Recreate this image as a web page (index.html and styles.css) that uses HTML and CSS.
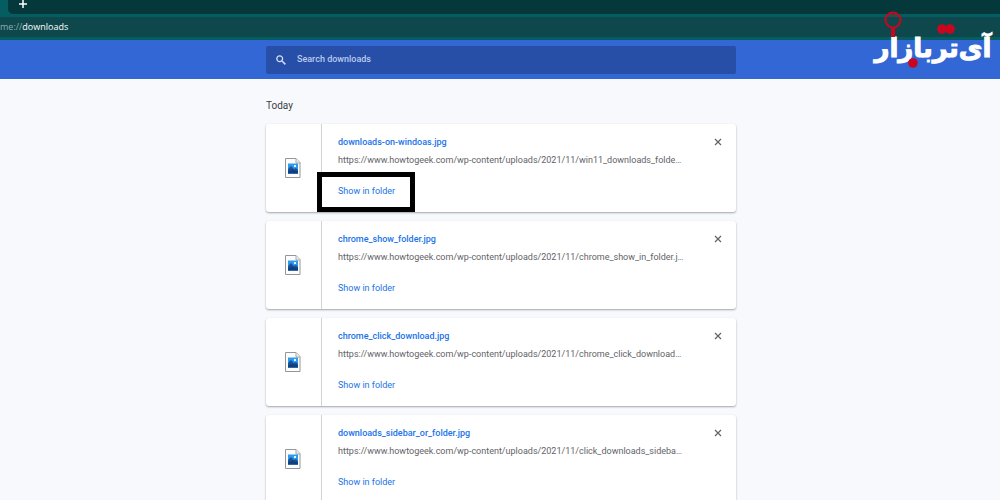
FILE: index.html
```html
<!DOCTYPE html>
<html lang="en">
<head>
<meta charset="utf-8">
<title>Downloads</title>
<link rel="stylesheet" href="styles.css">
</head>
<body>
<svg class="defs" aria-hidden="true">
  <symbol id="file" viewBox="0 0 16 20">
    <path d="M.5.5h10.500l4 4v15H.5z" fill="#fdfdfd" stroke="#92979b"/>
    <path d="M11 .5V5h4" fill="#eee" stroke="#a6a9ab"/>
    <path d="M3 5.500h10v10H3z" fill="#2c9bed"/>
    <path d="M3 11l3-3 3 3 2-1 2 2v3.500H3z" fill="#17539b"/>
    <path d="M3 13.500l4-2 6 2v2H3z" fill="#123f7d"/>
    <rect x="9" y="7" width="2" height="2" fill="#e9f8ff"/>
  </symbol>
  <symbol id="close" viewBox="0 0 8 8"><path d="M1 1l6 6M7 1L1 7" stroke="#5f6368" stroke-width="1.200"/></symbol>
</svg>
<header class="browser">
  <div class="tabs"><button class="new-tab" aria-label="New tab"><svg class="plus" viewBox="0 0 8 8"><path d="M4 0v8M0 4h8" stroke="#fff" stroke-width="1.500"/></svg></button></div>
  <div class="address"><span class="scheme">me://</span>downloads</div>
</header>
<div class="toolbar">
  <label class="search">
    <svg class="glass" viewBox="0 0 10 10" aria-hidden="true"><circle cx="3.700" cy="3.700" r="2.900" fill="none" stroke="#d3def6" stroke-width="1.300"/><path d="M6 6l3.400 3.400" stroke="#d3def6" stroke-width="1.500"/></svg>
    <input class="search-input" type="text" placeholder="Search downloads" aria-label="Search downloads">
  </label>
</div>
<svg class="logo" viewBox="0 0 120 60" role="img" aria-label="آی‌تربازار">
  <text class="logo-text" x="60" y="47" text-anchor="middle">آی‌تربازار</text>
  <circle cx="20" cy="10" r="7.500" fill="none" stroke="#c8071f" stroke-width="2"/>
  <path d="M16.500 6.500q3.500-2.500 7 0" fill="none" stroke="#c8071f"/>
  <path d="M20 18v9" stroke="#c8071f" stroke-width="4"/>
  <circle cx="69" cy="19" r="4.800" fill="#c8071f"/>
  <circle cx="77" cy="19" r="4.800" fill="#c8071f"/>
  <circle cx="40" cy="53" r="4.800" fill="#c8071f"/>
</svg>
<main class="downloads">
  <h1 class="day">Today</h1>
  <article class="card">
    <div class="thumb"><svg class="file"><use href="#file"/></svg></div>
    <div class="details">
      <a class="name" href="#">downloads-on-windoas.jpg</a>
      <span class="url">https://www.howtogeek.com/wp-content/uploads/2021/11/win11_downloads_folde…</span>
      <a class="show marked" href="#">Show in folder</a>
    </div>
    <button class="remove" aria-label="Remove from list"><svg class="close"><use href="#close"/></svg></button>
  </article>
  <article class="card">
    <div class="thumb"><svg class="file"><use href="#file"/></svg></div>
    <div class="details">
      <a class="name" href="#">chrome_show_folder.jpg</a>
      <span class="url">https://www.howtogeek.com/wp-content/uploads/2021/11/chrome_show_in_folder.j…</span>
      <a class="show" href="#">Show in folder</a>
    </div>
    <button class="remove" aria-label="Remove from list"><svg class="close"><use href="#close"/></svg></button>
  </article>
  <article class="card">
    <div class="thumb"><svg class="file"><use href="#file"/></svg></div>
    <div class="details">
      <a class="name" href="#">chrome_click_download.jpg</a>
      <span class="url">https://www.howtogeek.com/wp-content/uploads/2021/11/chrome_click_download…</span>
      <a class="show" href="#">Show in folder</a>
    </div>
    <button class="remove" aria-label="Remove from list"><svg class="close"><use href="#close"/></svg></button>
  </article>
  <article class="card">
    <div class="thumb"><svg class="file"><use href="#file"/></svg></div>
    <div class="details">
      <a class="name" href="#">downloads_sidebar_or_folder.jpg</a>
      <span class="url">https://www.howtogeek.com/wp-content/uploads/2021/11/click_downloads_sideba…</span>
      <a class="show" href="#">Show in folder</a>
    </div>
    <button class="remove" aria-label="Remove from list"><svg class="close"><use href="#close"/></svg></button>
  </article>
</main>
</body>
</html>
```
FILE: styles.css
```css
* { box-sizing: border-box; }
html { height: 100%; overflow: hidden; }
body {
  margin: 0;
  height: 100%;
  overflow: hidden;
  background: #f8f9fc;
  font: 9px/12px Roboto, "Liberation Sans", sans-serif;
  color: #5f6368;
}
button { margin: 0; padding: 0; border: 0; background: none; }
a { color: #1a73e8; text-decoration: none; }
.defs { display: none; }
.browser { background: #045e61; padding-bottom: 3px; }
.tabs {
  height: 14px;
  margin-left: 8px;
  padding-left: 11px;
  background: #04383b;
  border-bottom-left-radius: 5px;
}
.new-tab { display: block; }
.plus { display: block; width: 8px; height: 8px; }
.address {
  margin-top: 3px;
  height: 20px;
  background: #0e484c;
  color: #fff;
  font: 500 9px/20px "Open Sans", sans-serif;
}
.scheme { color: #8eabad; }
.toolbar {
  height: 39px;
  display: flex;
  justify-content: center;
  align-items: center;
  padding-left: 2px;
  background: #3367d6;
}
.search {
  display: flex;
  align-items: center;
  gap: 11px;
  width: 100%;
  max-width: 470px;
  height: 28px;
  padding: 0 10px;
  border-radius: 2px;
  background: #274fa8;
}
.glass { width: 10px; height: 10px; }
.search-input {
  flex: 1;
  min-width: 0;
  padding: 0 0 2px;
  border: 0;
  outline: 0;
  background: none;
  color: #fff;
  font: 500 9px/12px Roboto, sans-serif;
}
.search-input::placeholder { color: #bccbed; opacity: 1; }
.logo { position: absolute; top: 10px; right: 7px; width: 120px; height: 60px; overflow: visible; }
.logo-text { font: bold 26px "DejaVu Sans", sans-serif; fill: #fff; stroke: #fff; stroke-width: 1px; }
.downloads {
  display: flex;
  flex-direction: column;
  gap: 9px;
  max-width: 472px;
  margin: 0 auto;
  padding-left: 2px;
}
.day { margin: 21px 0 3px; font-size: 10px; line-height: 12px; font-weight: 400; color: #3c4043; }
.card {
  display: flex;
  flex-shrink: 0;
  min-height: 88px;
  border-radius: 3px;
  background: #fff;
  box-shadow: 0 1px 2px rgba(60, 64, 67, .45);
}
.thumb {
  display: flex;
  align-items: center;
  justify-content: center;
  width: 56px;
  padding-right: 2px;
  border-right: 1px solid #d2d3d6;
}
.file { width: 16px; height: 20px; }
.details {
  display: flex;
  flex-direction: column;
  align-items: flex-start;
  flex: 1;
  min-width: 0;
  padding: 12px 0 0 16px;
}
.name { font-weight: 500; }
.url { margin-top: 6px; white-space: nowrap; }
.show { position: relative; margin-top: 19px; }
.marked::after {
  content: "";
  position: absolute;
  inset: -13px -20px -15px -21px;
  border: 5px solid #000;
}
.remove { align-self: flex-start; margin: 14px 14px 0 0; }
.close { display: block; width: 8px; height: 8px; }
```
